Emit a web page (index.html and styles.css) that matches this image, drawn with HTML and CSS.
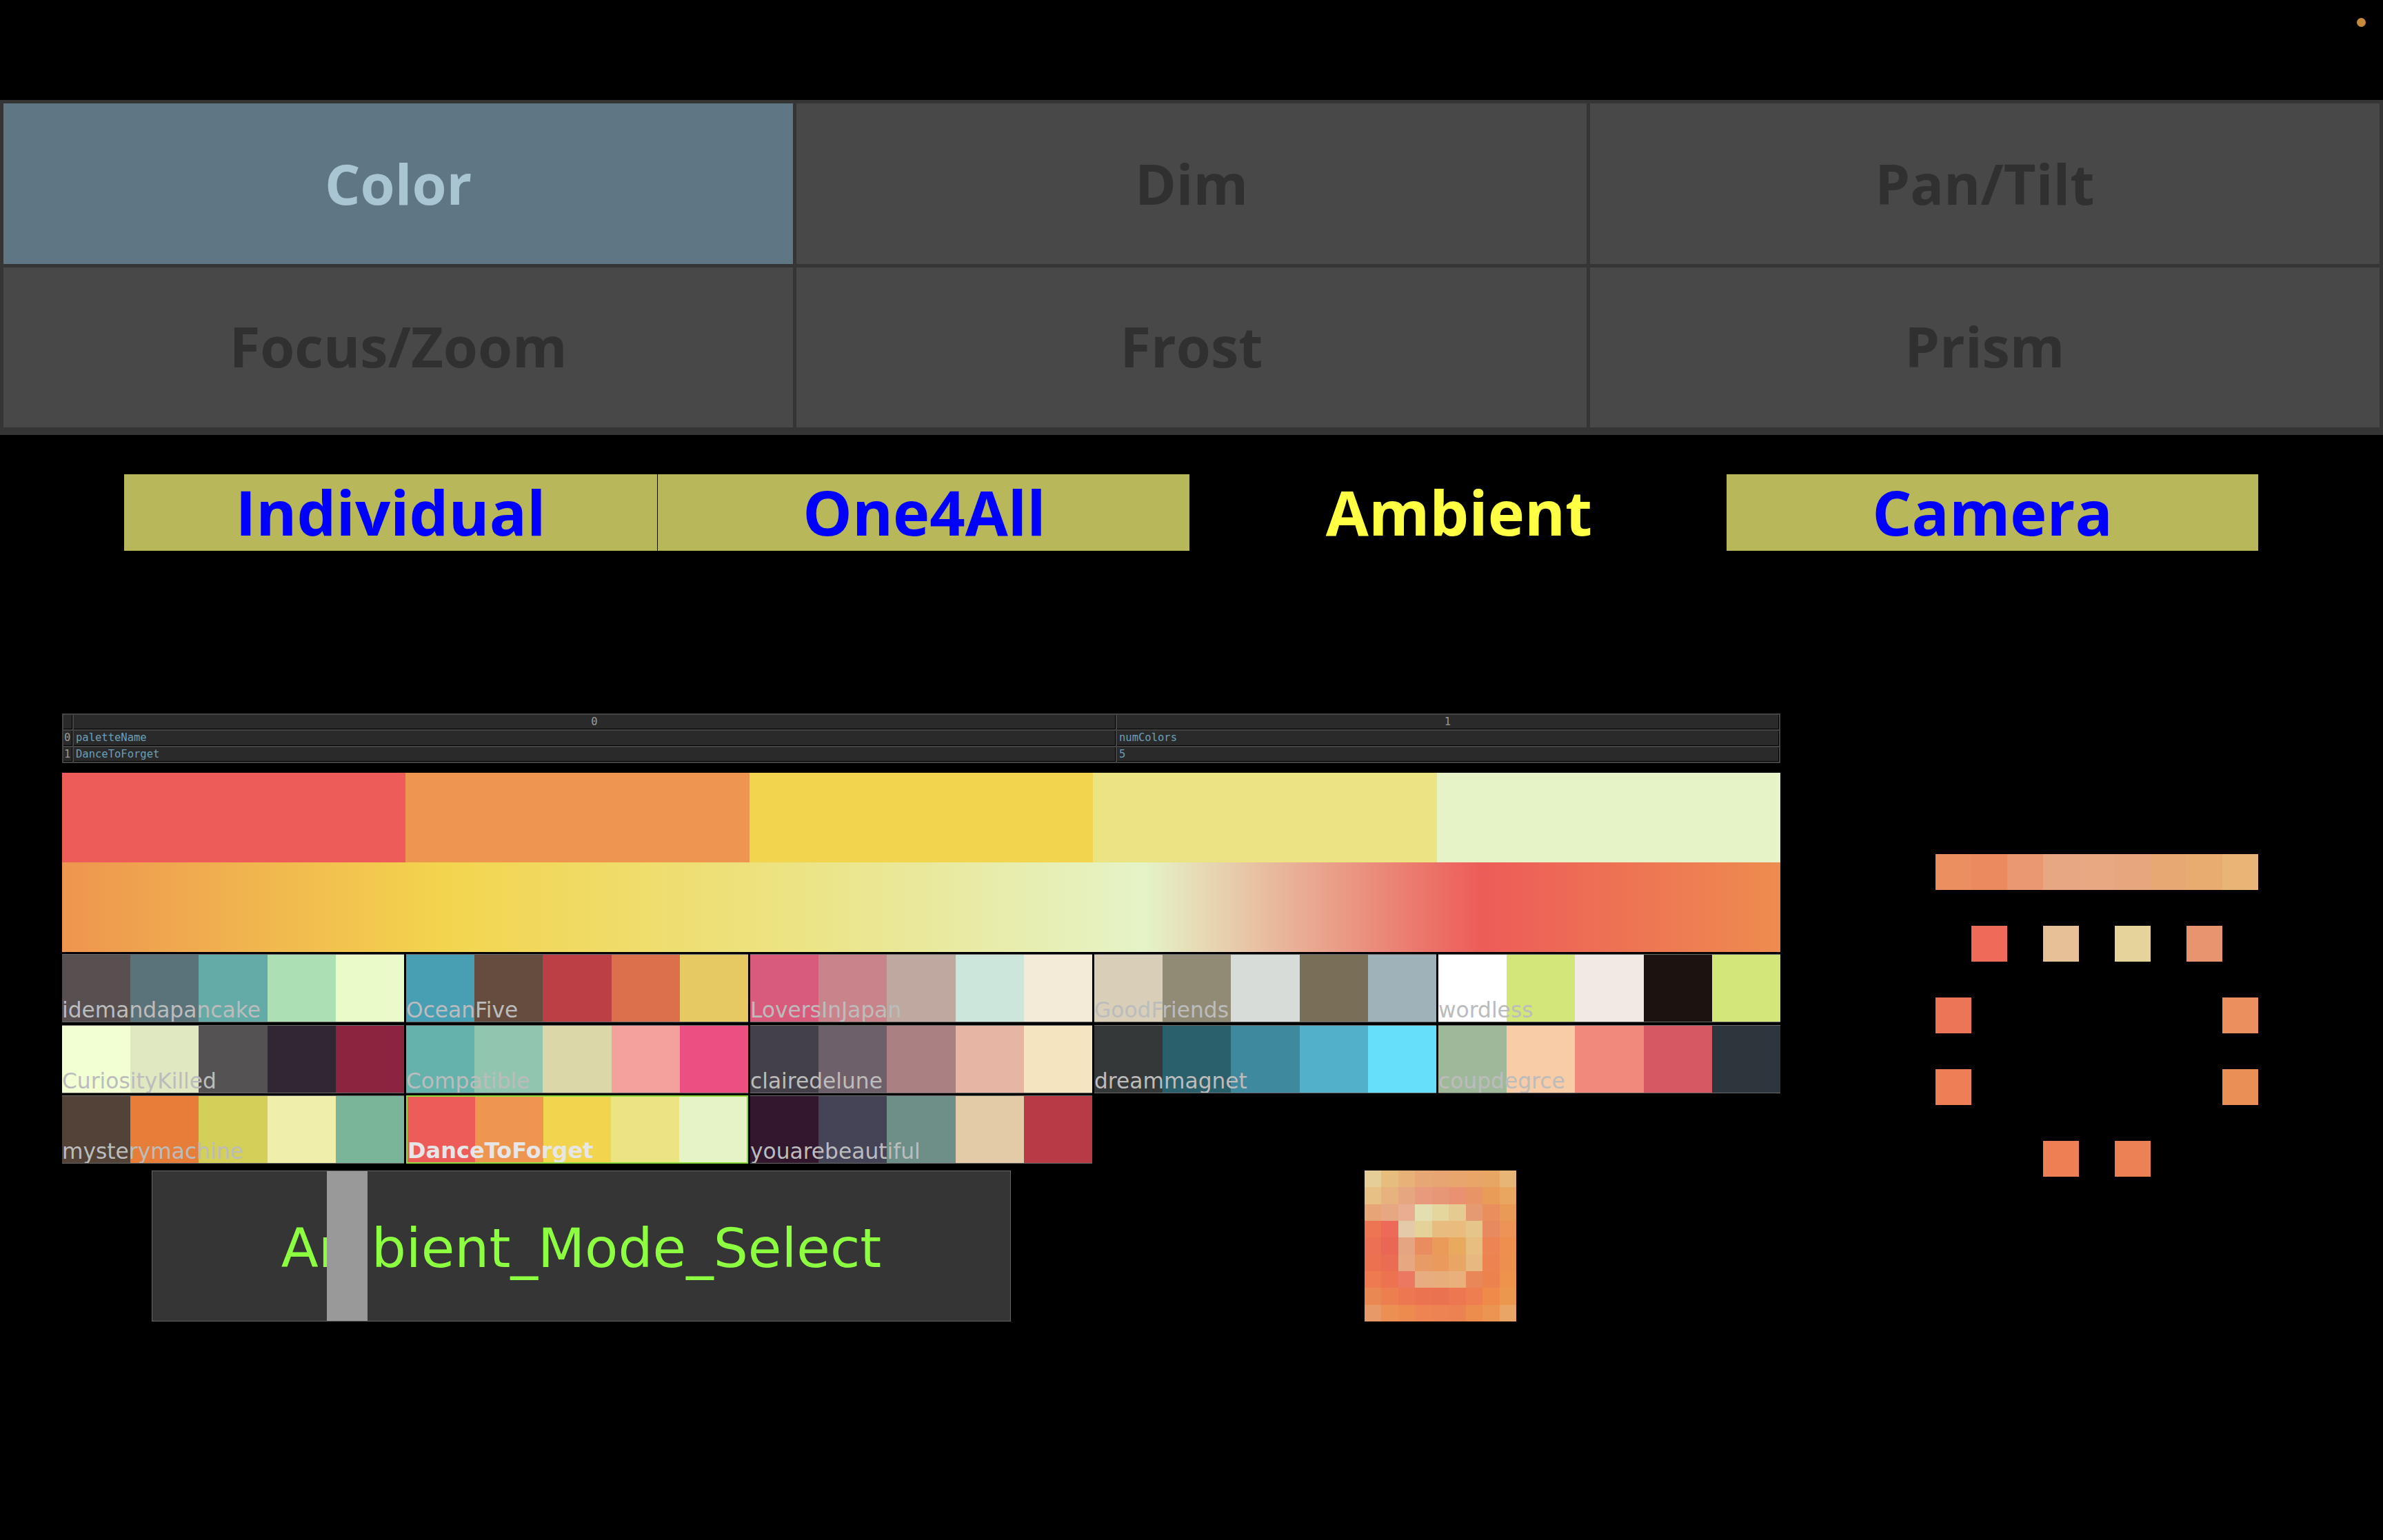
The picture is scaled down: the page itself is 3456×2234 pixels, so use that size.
FILE: index.html
```html
<!DOCTYPE html>
<html lang="en">

<head>
    <meta charset="UTF-8">
    <meta name="viewport" content="width=device-width, initial-scale=1.0">
    <title>Ambient Mode</title>
    <link rel="stylesheet" href="styles.css">
</head>

<body>
    <div class="status-dot"></div>

    <div class="tabs">
        <div class="tab active">Color</div>
        <div class="tab">Dim</div>
        <div class="tab">Pan/Tilt</div>
        <div class="tab">Focus/Zoom</div>
        <div class="tab">Frost</div>
        <div class="tab">Prism</div>
    </div>

    <div class="modes">
        <div class="mode">Individual</div>
        <div class="mode">One4All</div>
        <div class="mode selected">Ambient</div>
        <div class="mode">Camera</div>
    </div>

    <div class="workspace">
        <div class="left-col">
            <div class="dat">
                <div class="dat-cell idx"></div>
                <div class="dat-cell head">0</div>
                <div class="dat-cell head">1</div>
                <div class="dat-cell idx">0</div>
                <div class="dat-cell">paletteName</div>
                <div class="dat-cell">numColors</div>
                <div class="dat-cell idx">1</div>
                <div class="dat-cell">DanceToForget</div>
                <div class="dat-cell">5</div>
            </div>

            <div class="big-swatches">
                <div class="big-swatch" style="background:#ed5c58"></div>
                <div class="big-swatch" style="background:#ee954f"></div>
                <div class="big-swatch" style="background:#f3d44e"></div>
                <div class="big-swatch" style="background:#ece383"></div>
                <div class="big-swatch" style="background:#e5f3c7"></div>
            </div>
            <div class="ramp"></div>

            <div class="palettes">
                <div class="palette">
                    <i style="background:#574f50"></i><i style="background:#5a7279"></i><i style="background:#64aaa7"></i><i style="background:#acdfb3"></i><i style="background:#eafac8"></i>
                    <span class="palette-name">idemandapancake</span>
                </div>
                <div class="palette">
                    <i style="background:#489eb2"></i><i style="background:#664c3f"></i><i style="background:#bb3f45"></i><i style="background:#dc704c"></i><i style="background:#e6c962"></i>
                    <span class="palette-name">OceanFive</span>
                </div>
                <div class="palette">
                    <i style="background:#d95b7b"></i><i style="background:#c9848b"></i><i style="background:#bfa89f"></i><i style="background:#cde6dc"></i><i style="background:#f3ead7"></i>
                    <span class="palette-name">LoversInJapan</span>
                </div>
                <div class="palette">
                    <i style="background:#d9cfb9"></i><i style="background:#918b76"></i><i style="background:#d7dcd8"></i><i style="background:#796f57"></i><i style="background:#9fb2b9"></i>
                    <span class="palette-name">GoodFriends</span>
                </div>
                <div class="palette">
                    <i style="background:#ffffff"></i><i style="background:#d3e67a"></i><i style="background:#f1e9e3"></i><i style="background:#1c1310"></i><i style="background:#d3e67a"></i>
                    <span class="palette-name">wordless</span>
                </div>
                <div class="palette">
                    <i style="background:#f1ffd3"></i><i style="background:#dfe8c1"></i><i style="background:#555253"></i><i style="background:#302733"></i><i style="background:#8b243f"></i>
                    <span class="palette-name">CuriosityKilled</span>
                </div>
                <div class="palette">
                    <i style="background:#65b2ac"></i><i style="background:#92c5b0"></i><i style="background:#dbd7a9"></i><i style="background:#f4a09c"></i><i style="background:#ec5082"></i>
                    <span class="palette-name">Compatible</span>
                </div>
                <div class="palette">
                    <i style="background:#43404a"></i><i style="background:#6e606a"></i><i style="background:#aa8082"></i><i style="background:#e6b5a3"></i><i style="background:#f4e4c0"></i>
                    <span class="palette-name">clairedelune</span>
                </div>
                <div class="palette">
                    <i style="background:#343838"></i><i style="background:#2a5f6c"></i><i style="background:#3e899e"></i><i style="background:#53b0ca"></i><i style="background:#66dffa"></i>
                    <span class="palette-name">dreammagnet</span>
                </div>
                <div class="palette">
                    <i style="background:#a0b89a"></i><i style="background:#f7cca7"></i><i style="background:#f1897d"></i><i style="background:#d65863"></i><i style="background:#2e363d"></i>
                    <span class="palette-name">coupdegrce</span>
                </div>
                <div class="palette">
                    <i style="background:#534237"></i><i style="background:#e67e3a"></i><i style="background:#d3cf58"></i><i style="background:#f0eeab"></i><i style="background:#7ab59a"></i>
                    <span class="palette-name">mysterymachine</span>
                </div>
                <div class="palette current">
                    <i style="background:#ed5c58"></i><i style="background:#ee954f"></i><i style="background:#f3d44e"></i><i style="background:#ece383"></i><i style="background:#e5f3c7"></i>
                    <span class="palette-name">DanceToForget</span>
                </div>
                <div class="palette">
                    <i style="background:#33172f"></i><i style="background:#454356"></i><i style="background:#6d8f87"></i><i style="background:#e3cba8"></i><i style="background:#b83a47"></i>
                    <span class="palette-name">youarebeautiful</span>
                </div>
            </div>

            <div class="bottom-row">
                <div class="mode-select">
                    Ambient_Mode_Select
                    <div class="slider-handle"></div>
                </div>
                <div class="pixels">
                    <i style="background:#e5cf96"></i><i style="background:#e6bd7d"></i><i style="background:#e6b277"></i><i style="background:#e6a775"></i><i style="background:#e6a573"></i><i style="background:#e8a56d"></i><i style="background:#e9a468"></i><i style="background:#e7a663"></i><i style="background:#e7b575"></i>
                    <i style="background:#e6c084"></i><i style="background:#e8b27e"></i><i style="background:#e6a680"></i><i style="background:#e79a7c"></i><i style="background:#e79776"></i><i style="background:#e99170"></i><i style="background:#e89466"></i><i style="background:#e99c57"></i><i style="background:#e8a660"></i>
                    <i style="background:#e7a577"></i><i style="background:#e6a782"></i><i style="background:#e7ae91"></i><i style="background:#e3dfb0"></i><i style="background:#e5d69d"></i><i style="background:#e5ca91"></i><i style="background:#e69a72"></i><i style="background:#e98f5e"></i><i style="background:#e99b56"></i>
                    <i style="background:#ed7553"></i><i style="background:#ed6a58"></i><i style="background:#e5caa9"></i><i style="background:#e5d299"></i><i style="background:#e8bc7f"></i><i style="background:#e9bb7c"></i><i style="background:#e6c58b"></i><i style="background:#e88a5f"></i><i style="background:#ec9457"></i>
                    <i style="background:#ec7053"></i><i style="background:#ea6756"></i><i style="background:#e6a582"></i><i style="background:#e98d61"></i><i style="background:#ea9a59"></i><i style="background:#e9a95f"></i><i style="background:#e7be80"></i><i style="background:#ec8453"></i><i style="background:#ee8f4e"></i>
                    <i style="background:#ec7150"></i><i style="background:#ea6c53"></i><i style="background:#e7a781"></i><i style="background:#e99b66"></i><i style="background:#e99a5c"></i><i style="background:#e9a564"></i><i style="background:#e7b87f"></i><i style="background:#ec8350"></i><i style="background:#ed8f4d"></i>
                    <i style="background:#ed7b4f"></i><i style="background:#ec7250"></i><i style="background:#eb7962"></i><i style="background:#e7ac7f"></i><i style="background:#e7ae7b"></i><i style="background:#e8b07b"></i><i style="background:#ea8759"></i><i style="background:#ec824d"></i><i style="background:#ed934b"></i>
                    <i style="background:#ea8853"></i><i style="background:#ed7e50"></i><i style="background:#ed7750"></i><i style="background:#ec7350"></i><i style="background:#ea7250"></i><i style="background:#ed7751"></i><i style="background:#ee7d50"></i><i style="background:#ef8a4b"></i><i style="background:#ec974e"></i>
                    <i style="background:#e79a68"></i><i style="background:#ec8f52"></i><i style="background:#ed8b4f"></i><i style="background:#ee8452"></i><i style="background:#ed8353"></i><i style="background:#ec8252"></i><i style="background:#ec8d4e"></i><i style="background:#eb9550"></i><i style="background:#e8a566"></i>
                </div>
            </div>
        </div>

        <div class="fixtures">
            <i style="background:#ec8f60"></i><i style="background:#eb8a5f"></i><i style="background:#ea9872"></i><i style="background:#e7a782"></i><i style="background:#e8a982"></i><i style="background:#e7a67e"></i><i style="background:#e7a873"></i><i style="background:#e9ac70"></i><i style="background:#e9b577"></i>
            <i class="at-row3 at-col2" style="background:#ed6b58"></i>
            <i class="at-row3 at-col4" style="background:#e6c096"></i>
            <i class="at-row3 at-col6" style="background:#e5d49a"></i>
            <i class="at-row3 at-col8" style="background:#e8946f"></i>
            <i class="at-row5 at-col1" style="background:#ed7557"></i>
            <i class="at-row5 at-col9" style="background:#ea905f"></i>
            <i class="at-row7 at-col1" style="background:#ed7e55"></i>
            <i class="at-row7 at-col9" style="background:#ea9057"></i>
            <i class="at-row9 at-col4" style="background:#ec7f54"></i>
            <i class="at-row9 at-col6" style="background:#ec8253"></i>
        </div>
    </div>
</body>

</html>
```

FILE: styles.css
```css
html, body {
    margin: 0;
    background-color: #000;
}
body {
    position: relative;
    height: 2234px;
    overflow: hidden;
}
i {
    display: block;
}
.status-dot {
    position: absolute;
    left: 3418px;
    top: 26px;
    width: 13px;
    height: 13px;
    border-radius: 50%;
    background-color: #c68a3d;
}

/* parameter tabs */
.tabs {
    margin-top: 145px;
    padding: 5px 5px 11px;
    height: 470px;
    display: grid;
    grid-template-columns: repeat(3, 1fr);
    grid-template-rows: 233px 232px;
    gap: 5px;
    background-color: #353535;
}
.tab {
    box-sizing: border-box;
    padding-bottom: 2px;
    display: flex;
    justify-content: center;
    align-items: center;
    background-color: #484848;
    color: #303030;
    font-family: "Open Sans", sans-serif;
    font-weight: bold;
    font-size: 81px;
    line-height: 1;
}
.tab:nth-child(n+4) {
    padding-bottom: 5px;
}
.tab.active {
    background-color: #5f7684;
    color: #a9c5d3;
}

/* mode bar */
.modes {
    margin: 57px 0 0 180px;
    display: grid;
    grid-template-columns: 774px 771px 779px 771px;
    grid-template-rows: 111px;
}
.mode {
    box-sizing: border-box;
    padding-bottom: 3px;
    display: flex;
    justify-content: center;
    align-items: center;
    background-color: #b8b85a;
    color: #0000ff;
    font-family: "Open Sans", sans-serif;
    font-weight: bold;
    font-size: 90px;
    line-height: 1;
}
.mode:first-child {
    border-right: 1px solid #000;
}
.mode:nth-child(2) {
    padding-left: 2px;
}
.mode.selected {
    padding-left: 3px;
    background-color: transparent;
    color: #ffff44;
}

.workspace {
    margin-top: 236px;
    padding-left: 90px;
    display: flex;
    align-items: flex-start;
}
.left-col {
    width: 2492px;
}

/* table viewer */
.dat {
    height: 72px;
    box-sizing: border-box;
    padding: 2px;
    display: grid;
    grid-template-columns: 13px 1511px 1fr;
    grid-template-rows: 21px 22px 21px;
    gap: 2px;
    background-color: #444;
    font-family: "DejaVu Sans Mono", monospace;
    font-size: 15.5px;
    line-height: 21px;
}
.dat-cell {
    background-color: #2a2a2a;
    border-right: 1px solid #000;
    border-bottom: 1px solid #000;
    color: #6b9fb8;
    padding-left: 3px;
    overflow: hidden;
}
.dat-cell.idx {
    padding-left: 1px;
    color: #999;
}
.dat-cell.head {
    padding-left: 0;
    color: #999;
    text-align: center;
}

/* current palette */
.big-swatches {
    margin-top: 14px;
    height: 130px;
    display: flex;
}
.big-swatch {
    flex: 1;
}
.ramp {
    height: 130px;
    background: linear-gradient(to right, #ee954f 0%, #f3d44e 22%, #ece383 42.5%, #e5f3c7 63%, #ed5c58 82.6%, #ee8c4f 100%);
}

/* palette picker */
.palettes {
    margin-top: 3px;
    display: grid;
    grid-template-columns: repeat(5, 1fr);
    grid-auto-rows: 99px;
    gap: 3.5px 3px;
}
.palette {
    position: relative;
    display: flex;
    box-sizing: border-box;
    border-top: 1px solid #6a6a6a;
    border-bottom: 1px solid #6a6a6a;
    overflow: hidden;
}
.palette i {
    flex: 1;
}
.palette.current {
    border: 2px solid #8fdc3f;
}
.palette-name {
    position: absolute;
    left: 0;
    bottom: -1px;
    font-family: "DejaVu Sans", sans-serif;
    font-size: 31.3px;
    color: #bcbcbc;
}
.palette.current .palette-name {
    bottom: -2px;
    font-weight: bold;
    font-size: 32px;
    color: #e6e6e6;
}

/* bottom row */
.bottom-row {
    margin-top: 10px;
    padding-left: 130px;
    display: flex;
}
.mode-select {
    position: relative;
    box-sizing: border-box;
    width: 1246px;
    height: 219px;
    padding-top: 6px;
    display: flex;
    justify-content: center;
    align-items: center;
    background-color: #353535;
    border: 1px solid #666;
    color: #8cff40;
    font-family: "DejaVu Sans", sans-serif;
    font-size: 79px;
}
.slider-handle {
    position: absolute;
    left: 253px;
    top: 0;
    bottom: 0;
    width: 59px;
    background-color: #999;
}
.pixels {
    margin-left: 513px;
    width: 220px;
    height: 219px;
    display: grid;
    grid-template-columns: repeat(9, 1fr);
    grid-template-rows: repeat(9, 1fr);
}

/* fixture layout */
.fixtures {
    margin-top: 204px;
    margin-left: 225px;
    display: grid;
    grid-template-columns: repeat(9, 52px);
    grid-template-rows: repeat(9, 52px);
}
.at-row3 { grid-row: 3; }
.at-row5 { grid-row: 5; }
.at-row7 { grid-row: 7; }
.at-row9 { grid-row: 9; }
.at-col1 { grid-column: 1; }
.at-col2 { grid-column: 2; }
.at-col4 { grid-column: 4; }
.at-col6 { grid-column: 6; }
.at-col8 { grid-column: 8; }
.at-col9 { grid-column: 9; }
```
